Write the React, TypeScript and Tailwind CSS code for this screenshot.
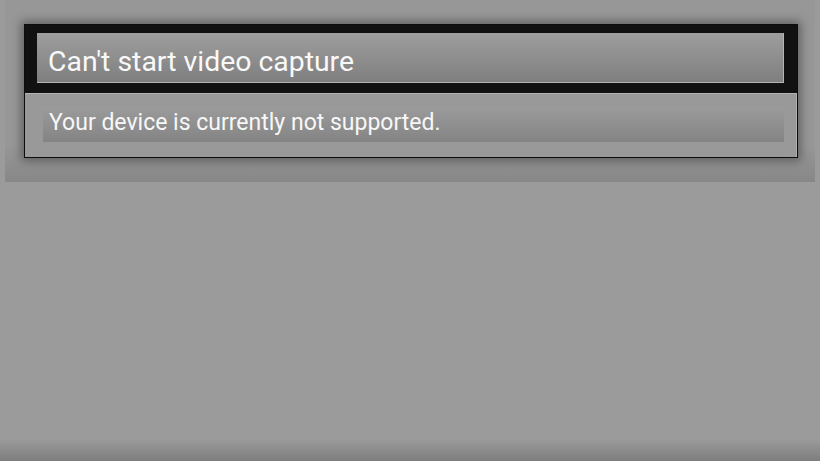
export default function App() {
  return (
    <div className="relative flex h-[461px] w-[820px] flex-col overflow-hidden bg-[#9b9b9b] font-['Roboto',sans-serif]">
      {/* dim panel behind the dialog */}
      <div className="mx-[5px] bg-gradient-to-b from-[#979797] from-80% to-[#878787] pb-[24px] pl-[19px] pr-[17px] pt-[24px]">
        <div className="border border-[#0c0c0c] shadow-[0_0_9px_3px_rgba(0,0,0,0.35)]">
          <div className="bg-[#111111] pb-[10px] pl-[12px] pr-[13px] pt-[8px]">
            <div className="h-[50px] border-b border-r border-[#b4b4b4] bg-gradient-to-b from-[#9e9e9e] to-[#7f7f7f] pl-[11px] pt-[15px] text-[28.4px] leading-[28px] text-[#f9f9f9]">
              Can&apos;t start video capture
            </div>
          </div>
          <div className="border-r border-t border-[#b2b2b2] bg-[#999999] pb-[15px] pl-[18px] pr-[12px] pt-[13px]">
            <div className="h-[35px] bg-gradient-to-b from-[#9b9b9b] to-[#848484] pl-[6px] pt-[4px] text-[23px] leading-[23px] text-[#f7f7f7]">
              Your device is currently not supported.
            </div>
          </div>
        </div>
      </div>
      <div className="flex-1" />
      <div className="h-[22px] bg-gradient-to-b from-[#9b9b9b] to-[#7e7e7e]" />
    </div>
  );
}
